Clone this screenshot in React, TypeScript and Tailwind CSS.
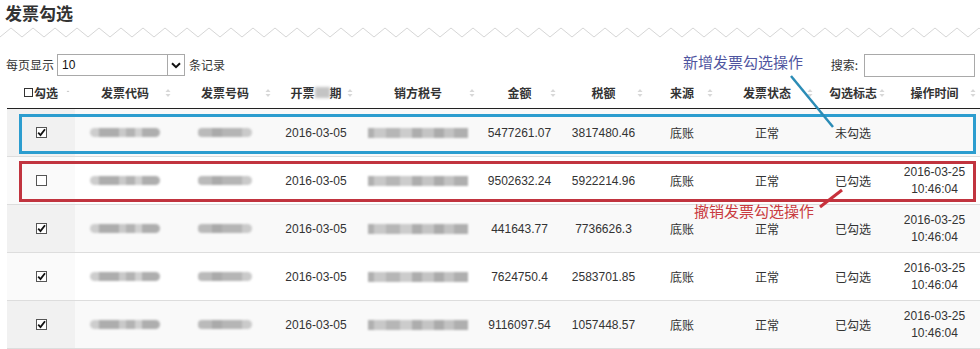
import React from "react";

const W = [
  "w-[68px]",
  "w-[100px]",
  "w-[100px]",
  "w-[82px]",
  "w-[122px]",
  "w-[81px]",
  "w-[87px]",
  "w-[70px]",
  "w-[100px]",
  "w-[72px]",
  "w-[91px]",
];

function SortIcon({ single }: { single?: boolean }) {
  return (
    <svg
      className="absolute right-[4px] top-1/2 -translate-y-1/2"
      width="6"
      height="10"
      viewBox="0 0 6 10"
    >
      {single ? (
        <path d="M1.5 4 L3 2.5 L4.5 4 Z" fill="#c8c8c8" />
      ) : (
        <>
          <path d="M0.5 4 L3 1 L5.5 4 Z" fill="#d8d8d8" />
          <path d="M0.5 6 L3 9 L5.5 6 Z" fill="#d8d8d8" />
        </>
      )}
    </svg>
  );
}

function Check({ checked }: { checked: boolean }) {
  return (
    <div className="w-[11px] h-[11px] border border-[#555] bg-white flex items-center justify-center">
      {checked && (
        <svg width="9" height="9" viewBox="0 0 9 9">
          <path d="M1.2 4.6 L3.5 7 L8 1.2" stroke="#111" strokeWidth="1.8" fill="none" />
        </svg>
      )}
    </div>
  );
}

function CodeBlob() {
  return (
    <div className="flex h-[9px] w-[70px] blur-[1px]">
      <div className="w-[9px] bg-[#cdcdcd] rounded-l-full" />
      <div className="w-[20px] bg-[#adadad]" />
      <div className="w-[7px] bg-[#c9c9c9]" />
      <div className="w-[9px] bg-[#b3b3b3]" />
      <div className="w-[7px] bg-[#d0d0d0]" />
      <div className="w-[18px] bg-[#aeaeae] rounded-r-full" />
    </div>
  );
}

function NumBlob() {
  return (
    <div className="flex h-[9px] w-[54px] blur-[1px]">
      <div className="w-[14px] bg-[#bababa] rounded-l-sm" />
      <div className="w-[10px] bg-[#aaaaaa]" />
      <div className="w-[20px] bg-[#b5b5b5]" />
      <div className="w-[10px] bg-[#cacaca] rounded-r-full" />
    </div>
  );
}

function TaxBlob() {
  return (
    <div className="flex h-[10px] w-[100px] blur-[1px]">
      <div className="w-[6px] bg-[#b0b0b0]" />
      <div className="w-[12px] bg-[#c8c8c8]" />
      <div className="w-[14px] bg-[#b6b6b6]" />
      <div className="w-[12px] bg-[#cccccc]" />
      <div className="w-[10px] bg-[#adadad]" />
      <div className="w-[12px] bg-[#c4c4c4]" />
      <div className="w-[10px] bg-[#ababab]" />
      <div className="w-[10px] bg-[#c2c2c2]" />
      <div className="w-[14px] bg-[#afafaf]" />
    </div>
  );
}

type Row = {
  checked: boolean;
  amount: string;
  tax: string;
  flag: string;
  time: boolean;
};

const rows: Row[] = [
  { checked: true, amount: "5477261.07", tax: "3817480.46", flag: "未勾选", time: false },
  { checked: false, amount: "9502632.24", tax: "5922214.96", flag: "已勾选", time: true },
  { checked: true, amount: "441643.77", tax: "7736626.3", flag: "已勾选", time: true },
  { checked: true, amount: "7624750.4", tax: "2583701.85", flag: "已勾选", time: true },
  { checked: true, amount: "9116097.54", tax: "1057448.57", flag: "已勾选", time: true },
];

const headers = ["发票代码", "发票号码", "", "销方税号", "金额", "税额", "来源", "发票状态", "勾选标志", "操作时间"];

export default function App() {
  const zig: string[] = [];
  for (let x = -11, i = 0; x <= 1000; x += 11, i++) {
    zig.push(`${x},${i % 2 === 0 ? 28 : 37}`);
  }
  return (
    <div className="relative w-[980px] h-[349px] overflow-hidden bg-white text-[#333] font-['Liberation_Sans','Noto_Sans_CJK_SC',sans-serif]">
      {/* Title */}
      <div className="h-[26px] pl-[5px] pt-[1px] text-[17px] font-bold leading-[24px] text-[#333] font-['Noto_Sans_CJK_SC',sans-serif]">
        发票勾选
      </div>
      <svg className="block" width="980" height="12" viewBox="0 26 980 12">
        <polyline points={zig.join(" ")} fill="none" stroke="#d6d6d6" strokeWidth="1" />
      </svg>

      {/* Controls */}
      <div className="mt-[15px] h-[24px] flex items-center justify-between pl-[6px] pr-[5px] text-[12px]">
        <div className="flex items-center">
          <span className="font-['Noto_Sans_CJK_SC',sans-serif]">每页显示</span>
          <div className="ml-[3px] w-[128px] h-[22px] border border-[#a9a9a9] flex items-center bg-white">
            <span className="flex-1 pl-[4px] text-[12px] text-[#111]">10</span>
            <div className="w-[17px] h-full border-l border-[#a9a9a9] flex items-center justify-center">
              <svg width="10" height="7" viewBox="0 0 10 7">
                <path d="M1 1.2 L5 5.2 L9 1.2" stroke="#111" strokeWidth="2" fill="none" />
              </svg>
            </div>
          </div>
          <span className="ml-[4px] font-['Noto_Sans_CJK_SC',sans-serif]">条记录</span>
        </div>
        <div className="flex items-center">
          <span className="font-['Noto_Sans_CJK_SC',sans-serif]">搜索:</span>
          <div className="ml-[6px] w-[111px] h-[23px] border border-[#a9a9a9] bg-white" />
        </div>
      </div>

      {/* Table */}
      <div className="ml-[7px] w-[973px]">
        <div className="flex h-[32px] border-b border-[#222] text-[12px] font-bold font-['Noto_Sans_CJK_SC',sans-serif]">
          <div className={`${W[0]} relative flex items-center justify-center`}>
            <span className="inline-block w-[9px] h-[9px] border border-[#333] mr-[1px]" />
            <span>勾选</span>
            <SortIcon single />
          </div>
          {headers.map((h, i) => (
            <div key={i} className={`${W[i + 1]} relative flex items-center justify-center`}>
              {i === 2 ? (
                <span className="flex items-center">
                  开票
                  <span className="inline-block w-[15px] h-[11px] bg-[#c4c4c4] blur-[1.5px]" />
                  期
                </span>
              ) : (
                <span>{h}</span>
              )}
              <SortIcon />
            </div>
          ))}
        </div>
        {rows.map((r, idx) => {
          const odd = idx % 2 === 0;
          return (
            <div
              key={idx}
              className={`flex h-[48px] border-b border-[#dddddd] text-[12px] ${odd ? "bg-[#f9f9f9]" : "bg-white"}`}
            >
              <div className={`${W[0]} flex items-center justify-center ${odd ? "bg-[#f1f1f1]" : "bg-[#fafafa]"}`}>
                <Check checked={r.checked} />
              </div>
              <div className={`${W[1]} flex items-center justify-center`}>
                <CodeBlob />
              </div>
              <div className={`${W[2]} flex items-center justify-center`}>
                <NumBlob />
              </div>
              <div className={`${W[3]} flex items-center justify-center`}>2016-03-05</div>
              <div className={`${W[4]} flex items-center justify-center`}>
                <TaxBlob />
              </div>
              <div className={`${W[5]} flex items-center justify-center`}>{r.amount}</div>
              <div className={`${W[6]} flex items-center justify-center`}>{r.tax}</div>
              <div className={`${W[7]} flex items-center justify-center font-['Noto_Sans_CJK_SC',sans-serif]`}>底账</div>
              <div className={`${W[8]} flex items-center justify-center font-['Noto_Sans_CJK_SC',sans-serif] leading-[14px]`}>正常</div>
              <div className={`${W[9]} flex items-center justify-center font-['Noto_Sans_CJK_SC',sans-serif]`}>{r.flag}</div>
              <div className={`${W[10]} flex flex-col items-center justify-center leading-[17px]`}>
                {r.time && (
                  <>
                    <span>2016-03-25</span>
                    <span>10:46:04</span>
                  </>
                )}
              </div>
            </div>
          );
        })}
      </div>

      {/* Annotation overlays */}
      <div className="absolute left-[19px] top-[114px] w-[957px] h-[40px] border-[3px] border-[#2c9dcf] pointer-events-none" />
      <div className="absolute left-[19px] top-[161px] w-[957px] h-[41px] border-[3px] border-[#c1343f] pointer-events-none" />
      <div className="absolute left-[683px] top-[53px] text-[15px] leading-[18px] text-[#4f55a0] font-['Noto_Sans_CJK_SC',sans-serif]">
        新增发票勾选操作
      </div>
      <div className="absolute left-[694px] top-[203px] text-[15px] leading-[15px] text-[#c93b40] font-['Noto_Sans_CJK_SC',sans-serif]">
        撤销发票勾选操作
      </div>
      <svg className="absolute left-0 top-0 pointer-events-none" width="980" height="349">
        <line x1="791" y1="76" x2="833" y2="127" stroke="#2b8cb6" strokeWidth="2.5" />
        <line x1="820" y1="207" x2="842" y2="190" stroke="#c8313c" strokeWidth="3" />
      </svg>
    </div>
  );
}
